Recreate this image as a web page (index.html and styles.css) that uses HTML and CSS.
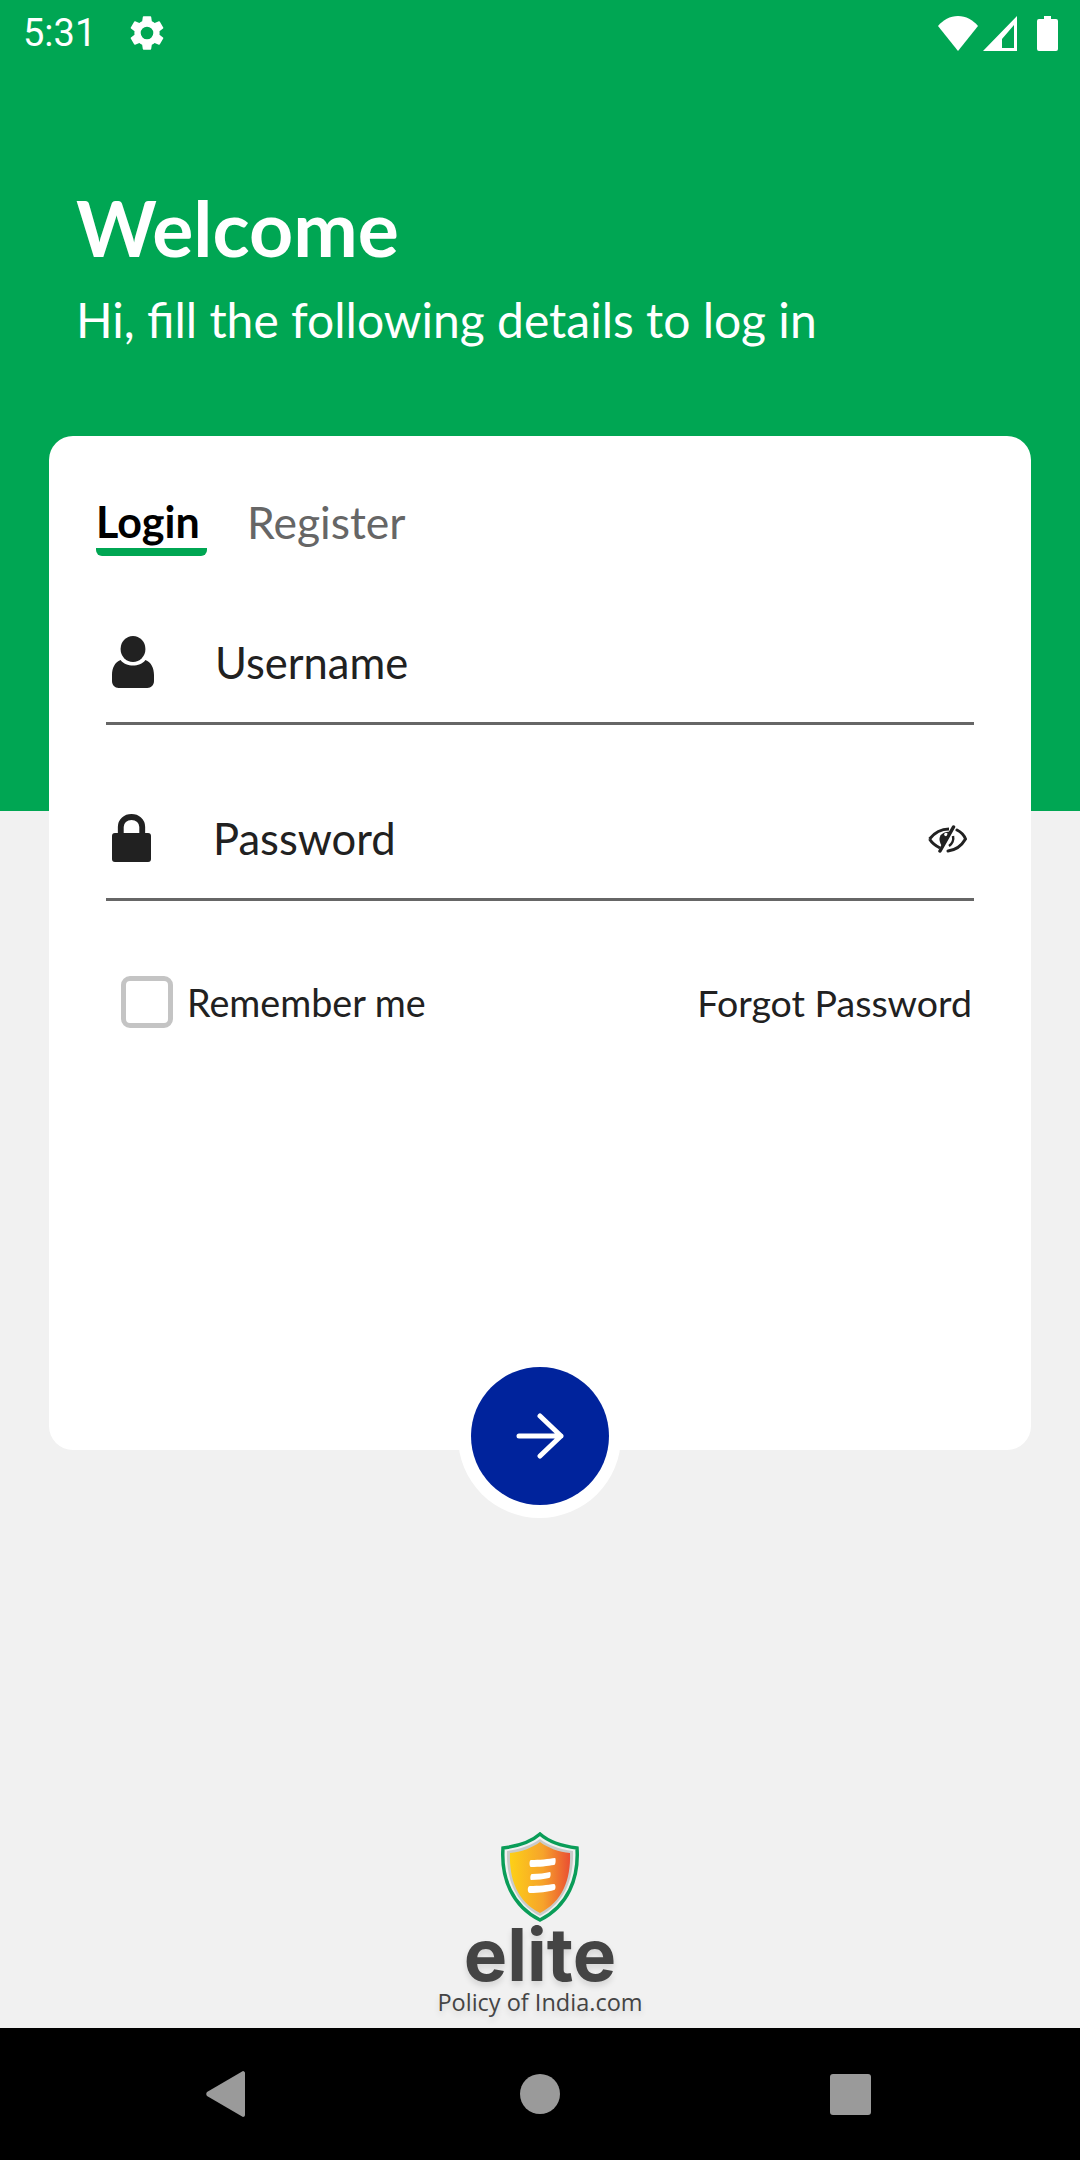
FILE: index.html
```html
<!DOCTYPE html>
<html>
<head>
<title>Login</title>
<link rel="stylesheet" href="styles.css">
</head>
<body>
<div class="screen">

  <div class="hero">
    <div class="statusBar">
      <span class="time">5:31</span>
      <svg class="gear" viewBox="0 0 24 24"><path fill="#fff" d="M19.14 12.94c.04-.3.06-.61.06-.94s-.02-.64-.07-.94l2.03-1.58a.49.49 0 0 0 .12-.61l-1.92-3.32a.49.49 0 0 0-.59-.22l-2.39.96c-.5-.38-1.03-.7-1.62-.94l-.36-2.54a.48.48 0 0 0-.48-.41h-3.84a.47.47 0 0 0-.47.41l-.36 2.54c-.59.24-1.13.57-1.62.94l-2.39-.96a.48.48 0 0 0-.59.22L2.74 8.87a.47.47 0 0 0 .12.61l2.03 1.58c-.05.3-.09.63-.09.94s.02.64.07.94l-2.03 1.58a.49.49 0 0 0-.12.61l1.92 3.32c.12.22.37.29.59.22l2.39-.96c.5.38 1.03.7 1.62.94l.36 2.54c.05.24.24.41.48.41h3.84c.24 0 .44-.17.47-.41l.36-2.54c.59-.24 1.13-.56 1.62-.94l2.39.96c.22.08.47 0 .59-.22l1.92-3.32a.46.46 0 0 0-.12-.61l-2.01-1.58zM12 15.6A3.6 3.6 0 1 1 12 8.4a3.6 3.6 0 0 1 0 7.2z"/></svg>
      <div class="statusRight">
        <svg class="wifi" viewBox="0 0 40 35"><path fill="#fff" d="M20 35 0 10C5 4 12 0 20 0s15 4 20 10z"/></svg>
        <svg class="signal" viewBox="0 0 34 35"><path fill="#fff" fill-rule="evenodd" d="M34 0v35H0zM31 9 19 23v9h12z"/></svg>
        <svg class="battery" viewBox="0 0 21 35"><path fill="#fff" d="M7 0h7v3h5q2 0 2 2v28q0 2-2 2H2q-2 0-2-2V5q0-2 2-2h5z"/></svg>
      </div>
    </div>
    <h1 class="welcome">Welcome</h1>
    <p class="subtitle">Hi, fill the following details to log in</p>
  </div>

  <div class="card">
    <div class="tabs">
      <div class="tab active">Login</div>
      <div class="tab">Register</div>
    </div>

    <div class="field userField">
      <svg class="fieldIcon personIcon" width="42" height="52" viewBox="0 0 44 52" preserveAspectRatio="none"><circle cx="22" cy="13" r="13" fill="#212121"/><path fill="#212121" d="M9 24c3 4 8 5.500 13 5.500S32 28 35 24c6 2 9 8 9 15v6c0 4-3 7-7 7H7c-4 0-7-3-7-7v-6c0-7 3-13 9-15z"/></svg>
      <span class="fieldText userText">Username</span>
    </div>

    <div class="field passField">
      <svg class="fieldIcon lockIcon" width="39" height="48" viewBox="0 0 40 48" preserveAspectRatio="none"><path fill="none" stroke="#212121" stroke-width="6" d="M9 22V13c0-6 5-10 11-10s11 4 11 10v9"/><rect x="0" y="19" width="40" height="29" rx="3" fill="#212121"/></svg>
      <span class="fieldText passText">Password</span>
      <svg class="eye" width="39" height="28" viewBox="0 0 39 28">
        <path fill="none" stroke="#212121" stroke-width="3" d="M1.500 14C7 7 13 4 21 4M1.500 14C4 18 8 21 12 23"/>
        <path fill="#212121" d="M22 7C16 6 11 10 11.500 15 12 18 13 20 14 21z"/>
        <circle cx="18" cy="9.500" r="1.800" fill="#fff"/>
        <path fill="none" stroke="#212121" stroke-width="3" stroke-linecap="round" d="M29 5c4 2 7 5 8.500 9C34 20 28 25 20 26"/>
        <path fill="none" stroke="#212121" stroke-width="2.500" d="M25 11c1 4-1 8-4 10"/>
        <path stroke="#212121" stroke-width="3.500" stroke-linecap="round" d="M25.500 2 12 26"/>
      </svg>
    </div>

    <div class="options">
      <div class="remember">
        <div class="checkbox"></div>
        <span>Remember me</span>
      </div>
      <span class="forgot">Forgot Password</span>
    </div>

    <div class="goRing">
      <div class="goButton">
        <svg width="48" height="46" viewBox="0 0 48 46"><path fill="none" stroke="#fff" stroke-width="5" stroke-linecap="round" stroke-linejoin="round" d="M3 23h42M24 3l21 20-21 20"/></svg>
      </div>
    </div>
  </div>

  <div class="brand">
    <svg class="shield" width="78" height="90" viewBox="0 0 78 90">
      <defs>
        <linearGradient id="shieldFill" x1="0" x2="1" y1="0" y2="0">
          <stop offset="0" stop-color="#fdd017"/>
          <stop offset="0.55" stop-color="#f6a32b"/>
          <stop offset="1" stop-color="#ea4f32"/>
        </linearGradient>
      </defs>
      <path fill="#f1f1f1" stroke="#0a9d58" stroke-width="3.500" d="M39 2c9 8 21 12 37 14 2 30-9 58-37 72C11 74 0 46 2 16 18 14 30 10 39 2z"/>
      <path fill="#c9cbc9" d="M39 7c8 6 19 10 33 12 1 27-8 52-33 65C14 71 5 46 6 19 20 17 31 13 39 7z"/>
      <path fill="url(#shieldFill)" d="M39 10c8 6 19 10 30 11 1 27-8 49-30 60C17 70 8 48 9 21 20 20 31 16 39 10z"/>
      <path fill="#fff" d="M30 28c8 0 18-1 24-2 1 0 1 7-1 7-6 1-15 2-23 2-2 0-2-7 0-7zM31 42c7 0 13-1 18-2 1 0 1 6-1 6-5 1-12 2-18 2-1 0-1-6 1-6zM29 54c8 0 18-1 24-2 2 0 2 6 0 6-6 2-15 3-24 3-3 0-3-7 0-7z"/>
    </svg>
    <div class="brandName">elite</div>
    <div class="brandSub">Policy of India.com</div>
  </div>

  <div class="navBar">
    <svg width="39" height="46" viewBox="0 0 39 46"><path fill="#9a9a9a" d="M37 0c1 0 2 1 2 2v42c0 1-1 2-2 2L1 25c-1-1-1-3 0-4z"/></svg>
    <div class="navHome"></div>
    <div class="navRecent"></div>
  </div>

</div>
</body>
</html>
```

FILE: styles.css
```css
* {
    box-sizing: border-box;
}
body {
    margin: 0;
    background-color: #f1f1f1;
    font-family: 'Lato', sans-serif;
}
.screen {
    width: 1080px;
    height: 2160px;
    display: flex;
    flex-direction: column;
    overflow: hidden;
}
.hero {
    height: 811px;
    flex-shrink: 0;
    background-color: #00a653;
    color: white;
    padding: 0 0 0 76px;
}
.statusBar {
    height: 66px;
    margin-left: -76px;
    padding: 0 22px 0 23px;
    display: flex;
    align-items: center;
}
.time {
    font-family: 'Roboto', sans-serif;
    font-size: 38px;
    width: 103px;
}
.gear {
    width: 42px;
    height: 42px;
}
.statusRight {
    margin-left: auto;
    display: flex;
    align-items: center;
    gap: 5px;
}
.wifi {
    width: 40px;
    height: 35px;
}
.signal {
    width: 34px;
    height: 35px;
}
.battery {
    width: 21px;
    height: 35px;
    margin-left: 15px;
}
.welcome {
    margin: 115px 0 0 0;
    font-size: 77px;
    line-height: 92px;
    font-weight: 700;
}
.subtitle {
    margin: 18px 0 0 0;
    font-size: 48px;
    line-height: 58px;
}
.card {
    position: relative;
    flex-shrink: 0;
    width: 982px;
    height: 1014px;
    margin: -375px 0 0 49px;
    padding: 0 57px;
    background-color: #fff;
    border-radius: 24px;
}
.tabs {
    display: flex;
    gap: 40px;
    margin-left: -10px;
    height: 120px;
}
.tab {
    height: 120px;
    padding: 59px 8px 0 0;
    font-size: 44.5px;
    line-height: 54px;
    color: #666;
}
.tab.active {
    width: 111px;
    padding-left: 0;
    padding-right: 0;
    font-size: 43px;
    color: #000;
    font-weight: 700;
    background: linear-gradient(#00a653, #00a653) no-repeat 0 112px / 111px 8px;
    border-radius: 0 0 6px 6px;
}
.field {
    display: flex;
    align-items: center;
    border-bottom: 3px solid #666;
}
.userField {
    height: 169px;
    padding: 46px 0 0 6px;
}
.passField {
    height: 176px;
    padding: 53px 7px 0 6px;
}
.fieldText {
    font-size: 43.5px;
    color: #212121;
}
.userText {
    margin-left: 61px;
}
.passText {
    margin-left: 62px;
}
.eye {
    margin-left: auto;
    margin-top: 2px;
}
.options {
    display: flex;
    justify-content: space-between;
    align-items: center;
    margin-top: 75px;
    padding-left: 15px;
    font-size: 37.7px;
    color: #212121;
}
.remember {
    display: flex;
    align-items: center;
    gap: 14px;
}
.checkbox {
    width: 52px;
    height: 52px;
    border: 5px solid #c4c4c4;
    border-radius: 9px;
}
.forgot {
    margin-right: 2px;
    font-size: 37.5px;
}
.goRing {
    position: absolute;
    left: 409px;
    top: 919px;
    width: 163px;
    height: 163px;
    padding: 12px 12.5px;
    display: flex;
    background-color: #fff;
    border-radius: 50%;
}
.goButton {
    width: 138px;
    height: 138px;
    display: flex;
    align-items: center;
    justify-content: center;
    background-color: #00239c;
    border-radius: 50%;
}
.brand {
    margin-top: auto;
    height: 196px;
    display: flex;
    flex-direction: column;
    align-items: center;
    text-shadow: 0 4px 6px rgba(0,0,0,0.12);
}
.brandName {
    margin-top: 2px;
    font-family: 'Inter', sans-serif;
    font-size: 73px;
    font-weight: 700;
    line-height: 62px;
    color: #444;
}
.brandSub {
    margin-top: 0;
    font-family: 'Open Sans', sans-serif;
    font-size: 23.5px;
    font-weight: 500;
    line-height: 32px;
    color: #444;
}
.navBar {
    height: 132px;
    flex-shrink: 0;
    background-color: #000;
    display: flex;
    align-items: center;
    padding-left: 206px;
}
.navHome {
    width: 40px;
    height: 40px;
    margin-left: 275px;
    border-radius: 50%;
    background-color: #9a9a9a;
}
.navRecent {
    width: 41px;
    height: 41px;
    margin-left: 270px;
    border-radius: 3px;
    background-color: #9a9a9a;
}
```
